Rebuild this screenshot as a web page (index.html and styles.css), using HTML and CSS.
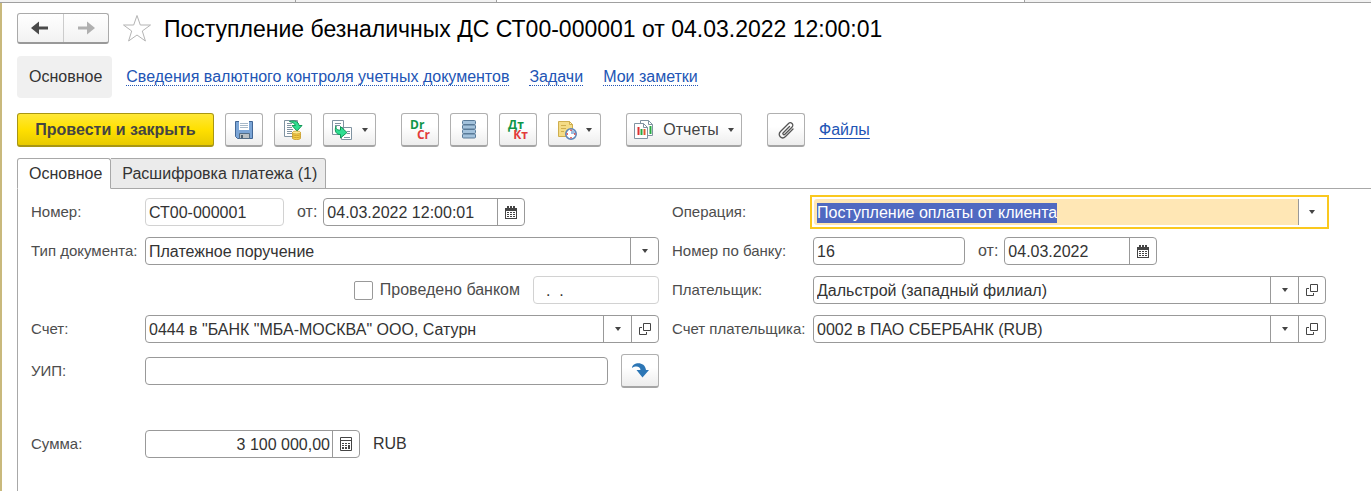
FILE: index.html
```html
<!DOCTYPE html>
<html lang="ru">
<head>
  <meta charset="UTF-8">
  <title>Поступление безналичных ДС</title>
  <meta name="viewport" content="width=device-width, initial-scale=1.0">
  <link rel="stylesheet" href="styles.css">
</head>
<body>

<!-- общие значки -->
<svg class="sprite" aria-hidden="true">
  <symbol id="i-calendar" viewBox="0 0 12 13">
    <path fill="#444" d="M0 2h2V0h2v2h1V0h2v2h1V0h2v2h2v11H0z"/>
    <path fill="#fff" d="M1 5h10v7H1z"/>
    <path fill="#444" d="M2 6h2v1H2zM5 6h2v1H5zM8 6h2v1H8zM2 8h2v1H2zM5 8h2v1H5zM8 8h2v1H8zM2 10h2v1H2zM5 10h2v1H5zM8 10h2v1H8z"/>
  </symbol>
  <symbol id="i-open" viewBox="0 0 12 12">
    <path fill="none" stroke="#444" d="M4.500 .5h7v7h-7zM3 4.500H.5v7h7V9"/>
  </symbol>
</svg>

<div class="window-tabs">
  <span></span><span></span><span class="current"></span><span></span>
</div>

<div class="window">
  <header class="title-row">
    <div class="history">
      <button type="button" aria-label="Назад">
        <svg width="18" height="14" viewBox="0 0 18 14"><path fill="#4a4a4a" d="M0 7 8 .5v5h9v3H8v5z"/></svg>
      </button>
      <button type="button" aria-label="Вперед">
        <svg width="18" height="14" viewBox="0 0 18 14"><path fill="#b0b0b0" d="M18 7 10 .5v5H1v3h9v5z"/></svg>
      </button>
    </div>
    <button type="button" class="star" aria-label="В избранное">
      <svg width="30" height="29" viewBox="0 0 30 29"><path fill="none" stroke="#b4b4b4" d="M15 1.500 18.300 11h10.200l-8.200 6 3.100 10L15 21l-8.400 6 3.100-10L1.500 11h10.200z"/></svg>
    </button>
    <h1>Поступление безналичных ДС СТ00-000001 от 04.03.2022 12:00:01</h1>
  </header>

  <nav class="sections">
    <span class="section-current">Основное</span>
    <a href="#">Сведения валютного контроля учетных документов</a>
    <a href="#">Задачи</a>
    <a href="#">Мои заметки</a>
  </nav>

  <div class="toolbar">
    <button type="button" class="btn btn-primary">Провести и закрыть</button>
    <button type="button" class="btn" aria-label="Записать">
      <svg width="20" height="20" viewBox="0 0 20 20">
        <path fill="#7ba5d6" stroke="#426796" d="M1.500 1.500h17v17h-15l-2-2z"/>
        <path fill="#fff" d="M5 1h10v9H5z"/>
        <path stroke="#a7b8c8" d="M6 3.500h8M6 5.500h8M6 7.500h8"/>
        <path fill="#b9c0c4" stroke="#536d86" d="M5.500 13.500h10v5h-10z"/>
        <path fill="#4f6373" d="M7 15h2v3H7z"/>
      </svg>
    </button>
    <button type="button" class="btn" aria-label="Провести">
      <svg width="20" height="20" viewBox="0 0 20 20">
        <path fill="#fff" stroke="#8093a1" d="M1.500.5h13v16h-13z"/>
        <path stroke="#8093a1" d="M4 3.500h5M4 5.500h4M4 7.500h5M4 9.500h6M4 11.500h5M4 13.500h5"/>
        <path fill="#2ede91" stroke="#129757" d="M6.500 1.500c5-1.500 9 0 9.500 4h3L14 11 9 5.500h3.500c-.5-2-3-3-6-4z"/>
        <path fill="#f5cf4c" stroke="#c69a27" stroke-width=".8" d="M9.500 12.500v6c1 1.500 7 1.500 8 0v-6z"/>
        <ellipse cx="13.500" cy="12.500" rx="4" ry="1.500" fill="#ffe98c" stroke="#c69a27" stroke-width=".8"/>
        <path fill="none" stroke="#c69a27" stroke-width=".8" d="M9.500 14.500c1 1.500 7 1.500 8 0M9.500 16.500c1 1.500 7 1.500 8 0"/>
      </svg>
    </button>
    <button type="button" class="btn btn-menu" aria-label="Создать на основании">
      <svg width="21" height="20" viewBox="0 0 21 20">
        <path fill="#fff" stroke="#8093a1" d="M.5.5h11v14H.5zM9.500 7.500h10v12h-10z"/>
        <path stroke="#8093a1" d="M3 3.500h6M3 5.500h5M15 11.500h3M15 13.500h3M12 17.500h6"/>
        <path fill="#2ede91" stroke="#129757" d="M4 6c-.5 3 1.500 4.500 4.500 4V6.500l6.500 6L8.500 18v-3.500C4.500 15 2 11 4 6z"/>
      </svg>
      <i class="caret"></i>
    </button>

    <button type="button" class="btn btn-split" aria-label="Dr Cr">
      <span class="posting"><b class="debit">Dr</b><b class="credit">Cr</b></span>
    </button>
    <button type="button" class="btn" aria-label="Движения документа">
      <svg width="14" height="19" viewBox="0 0 14 19">
        <g fill="#a3c2dc" stroke="#587a98">
          <rect x=".5" y=".5" width="13" height="4" rx="1"/>
          <rect x=".5" y="5" width="13" height="4" rx="1"/>
          <rect x=".5" y="9.500" width="13" height="4" rx="1"/>
          <rect x=".5" y="14" width="13" height="4" rx="1"/>
        </g>
      </svg>
    </button>
    <button type="button" class="btn" aria-label="Дт Кт">
      <span class="posting"><b class="debit">Дт</b><b class="credit">Кт</b></span>
    </button>
    <button type="button" class="btn btn-menu" aria-label="Напоминание">
      <svg width="20" height="20" viewBox="0 0 20 20">
        <path fill="#f4dc86" stroke="#cfae4e" d="M1.500 1.500h11l3 3v12h-14z"/>
        <path fill="#fff3bd" stroke="#cfae4e" d="M12.500 1.500v3h3z"/>
        <path stroke="#cfae4e" d="M4 5.500h5M4 8.500h5M4 11.500h3"/>
        <circle cx="14" cy="14" r="5.200" fill="#fff" stroke="#5b86ba" stroke-width="1.600"/>
        <path fill="#9dbce0" d="M14 14v-4a4 4 0 0 1 4 4z"/>
        <path stroke="#e03b3b" stroke-width="1.400" d="M14 9.500v1.500M14 17v1.500M9.500 14H11M17 14h1.500"/>
      </svg>
      <i class="caret"></i>
    </button>

    <button type="button" class="btn btn-menu btn-reports btn-split">
      <svg width="20" height="20" viewBox="0 0 20 20">
        <path fill="#fff" stroke="#8093a1" d="M6.500.5h8l4 4v11h-12z"/>
        <path stroke="#27ab42" stroke-width="2" d="M16.500 6v8"/>
        <path fill="#fff" stroke="#8093a1" d="M.5 3.500h9l4 4v11H.5z"/>
        <path fill="none" stroke="#8093a1" d="M9.500 3.500v4h4M14.500.5v4h4"/>
        <path stroke="#dd3030" stroke-width="2" d="M4.500 7v8"/>
        <path stroke="#27ab42" stroke-width="2" d="M7.500 9v6"/>
        <path stroke="#e05a30" stroke-width="2" d="M10.500 9v6"/>
      </svg>
      Отчеты
      <i class="caret"></i>
    </button>
    <button type="button" class="btn btn-split" aria-label="Вложения">
      <svg width="18" height="18" viewBox="0 0 18 18"><path fill="none" stroke="#555" stroke-width="1.300" stroke-linecap="round" d="M12.500 5.500 6.300 11.700c-1.200 1.200.4 2.800 1.600 1.600l7-7c2.600-2.600-1-6.200-3.600-3.600L3.500 10.500c-3.700 3.700 1.300 8.700 5 5l7.500-7.500"/></svg>
    </button>
    <a href="#" class="files-link">Файлы</a>
  </div>

  <div class="tabs" role="tablist">
    <button type="button" class="tab tab-active" role="tab" aria-selected="true">Основное</button>
    <button type="button" class="tab" role="tab" aria-selected="false">Расшифровка платежа (1)</button>
  </div>

  <form class="panel">
    <div class="column">
      <div class="row">
        <label class="label" for="number">Номер:</label>
        <input class="field field-readonly w-number" id="number" value="СТ00-000001" readonly>
        <label class="label-from" for="date">от:</label>
        <div class="field w-datetime">
          <input id="date" value="04.03.2022 12:00:01">
          <button type="button" aria-label="Выбрать дату"><svg width="12" height="13"><use href="#i-calendar"/></svg></button>
        </div>
      </div>
      <div class="row">
        <label class="label" for="doctype">Тип документа:</label>
        <div class="field grow">
          <div class="select"><select id="doctype"><option>Платежное поручение</option></select></div>
        </div>
      </div>
      <div class="row row-end">
        <label class="check"><input type="checkbox"> Проведено банком</label>
        <input class="field field-readonly w-bankdate" value="  .  ." aria-label="Дата проведения банком" readonly>
      </div>
      <div class="row">
        <label class="label" for="account">Счет:</label>
        <div class="field grow">
          <div class="select"><select id="account"><option>0444 в "БАНК "МБА-МОСКВА" ООО, Сатурн</option></select></div>
          <button type="button" aria-label="Открыть счет"><svg width="12" height="12"><use href="#i-open"/></svg></button>
        </div>
      </div>
      <div class="row row-uip">
        <label class="label" for="uip">УИП:</label>
        <input class="field grow" id="uip">
        <button type="button" class="btn btn-uip" aria-label="Заполнить УИП">
          <svg width="17" height="15" viewBox="0 0 17 15"><path fill="#2c76b5" d="M0 5C0-1 13-2.500 14 7h3l-6.500 7.500L4.500 7h4C8.500 3.500 4 2.500 0 5z"/></svg>
        </button>
      </div>
      <div class="row row-sum">
        <label class="label" for="sum">Сумма:</label>
        <div class="field w-sum">
          <input class="number" id="sum" value="3 100 000,00">
          <button type="button" aria-label="Калькулятор">
            <svg width="12" height="14" viewBox="0 0 12 14">
              <path fill="none" stroke="#444" d="M.5.5h11v13H.5z"/>
              <path fill="#444" d="M1 3h10v1H1zM2 6h2v1H2zM5 6h2v1H5zM8 6h2v1H8zM2 8h2v1H2zM5 8h2v1H5zM8 8h2v4H8zM2 10h2v2H2zM5 10h2v2H5z"/>
            </svg>
          </button>
        </div>
        <span class="currency">RUB</span>
      </div>
    </div>

    <div class="column column-right">
      <div class="row">
        <label class="label" for="operation">Операция:</label>
        <div class="field field-focus grow">
          <input id="operation" value="Поступление оплаты от клиента" role="combobox" aria-expanded="false">
          <button type="button" aria-label="Выбрать операцию"><i class="caret"></i></button>
        </div>
      </div>
      <div class="row">
        <label class="label" for="banknumber">Номер по банку:</label>
        <input class="field w-banknumber" id="banknumber" value="16">
        <label class="label-from" for="bankdate">от:</label>
        <div class="field w-date">
          <input id="bankdate" value="04.03.2022">
          <button type="button" aria-label="Выбрать дату"><svg width="12" height="13"><use href="#i-calendar"/></svg></button>
        </div>
      </div>
      <div class="row">
        <label class="label" for="payer">Плательщик:</label>
        <div class="field grow">
          <div class="select"><select id="payer"><option>Дальстрой (западный филиал)</option></select></div>
          <button type="button" aria-label="Открыть плательщика"><svg width="12" height="12"><use href="#i-open"/></svg></button>
        </div>
      </div>
      <div class="row">
        <label class="label" for="payeraccount">Счет плательщика:</label>
        <div class="field grow">
          <div class="select"><select id="payeraccount"><option>0002 в ПАО СБЕРБАНК (RUB)</option></select></div>
          <button type="button" aria-label="Открыть счет плательщика"><svg width="12" height="12"><use href="#i-open"/></svg></button>
        </div>
      </div>
    </div>
  </form>
</div>

<script src="script.js"></script>
</body>
</html>
```
FILE: styles.css
```css
* { box-sizing: border-box; }
body {
  margin: 0;
  min-height: 100vh;
  display: flex;
  flex-direction: column;
  background: #fff;
  color: #333;
  font-family: "Liberation Sans", Arial, sans-serif;
  font-size: 16px;
  line-height: 20px;
}
button, input, select {
  font: inherit;
  color: inherit;
}
button {
  padding: 0;
  border: none;
  background: none;
  display: flex;
  align-items: center;
  justify-content: center;
}
a { color: #2255b5; }
.sprite { display: none; }

/* нижний край вкладок окна */
.window-tabs {
  display: flex;
  height: 3px;
  background: #f2f2f2;
  border-bottom: 1px solid #a0a0a0;
}
.window-tabs span {
  flex: 0 1 201px;
  border-right: 1px solid #a0a0a0;
}
.window-tabs span:first-child { flex-basis: 296px; }
.window-tabs span:last-child { flex: 1; border: none; }
.window-tabs .current { flex-basis: 528px; background: #fff; }

.window {
  flex: 1;
  display: flex;
  flex-direction: column;
  border-left: 2px solid #c9b97c;
  padding: 10px 0 0 15px;
}

.title-row {
  display: flex;
  align-items: center;
  height: 31px;
}
.history {
  display: flex;
  width: 92px;
  height: 31px;
  border: 1px solid #aaa;
  border-bottom: 2px solid #999;
  border-radius: 3px;
  background: linear-gradient(#fff, #f2f2f2);
}
.history button { flex: 1; }
.history button + button { border-left: 1px solid #ccc; }
.star { margin: 0 12px 0 13px; }
h1 {
  margin: 0;
  color: #000;
  font-size: 23px;
  font-weight: normal;
  line-height: 28px;
  white-space: nowrap;
}

.sections {
  display: flex;
  align-items: center;
  gap: 20px;
  margin-top: 12px;
}
.sections a {
  text-decoration: none;
  line-height: 17px;
  border-bottom: 1px dotted #2255b5;
}
.section-current {
  margin-right: -6px;
  padding: 11px 10px 11px 12px;
  border-radius: 4px;
  background: #f0f0f0;
}

.toolbar {
  display: flex;
  align-items: center;
  gap: 11px;
  margin-top: 15px;
}
.btn {
  flex: none;
  width: 38px;
  height: 34px;
  border: 1px solid #b0b0b0;
  border-bottom: 2px solid #a5a5a5;
  border-radius: 3px;
  background: linear-gradient(#fff 40%, #ededed);
}
.btn-primary {
  width: 197px;
  border-color: #a89613;
  background: linear-gradient(#ffe838, #ffe000 50%, #e8ca00);
  color: #444;
  font-weight: bold;
}
.btn-menu {
  width: 53px;
  gap: 9px;
}
.btn-split { margin-left: 14px; }
.btn-reports {
  width: 116px;
  color: #444;
}
.caret {
  border: 3px solid transparent;
  border-top: 4px solid #444;
  border-bottom: none;
}
.posting {
  display: flex;
  flex-direction: column;
  width: 20px;
  font-family: "Open Sans", sans-serif;
  font-size: 12px;
  line-height: 10px;
}
.debit {
  align-self: flex-start;
  color: #0f9648;
}
.credit {
  align-self: flex-end;
  color: #e23b3b;
}
.files-link { margin-left: 3px; text-underline-offset: 3px; }

.tabs {
  display: flex;
  height: 31px;
  margin-top: 11px;
  border-bottom: 1px solid #a8a8a8;
}
.tab {
  height: 31px;
  padding: 0 8px 0 11px;
  border: 1px solid #a8a8a8;
  border-left: none;
  border-radius: 0 3px 0 0;
  background: #ebebeb;
}
.tab-active {
  border-left: 1px solid #a8a8a8;
  border-bottom-color: #fff;
  border-radius: 3px 3px 0 0;
  background: #fff;
}

.panel {
  flex: 1;
  display: grid;
  grid-template-columns: 628px minmax(0, 654px);
  column-gap: 13px;
  align-items: start;
  padding: 9px 12px 32px 13px;
  border-left: 1px solid #a8a8a8;
}
.column {
  display: flex;
  flex-direction: column;
  gap: 11px;
}
.row {
  display: flex;
  align-items: center;
  height: 28px;
}
.row-end { justify-content: flex-end; }
.row-uip { margin-top: 3px; }
.row-sum { margin-top: 34px; }
.label {
  flex: none;
  width: 114px;
  color: #4d4d4d;
  font-size: 15px;
  white-space: nowrap;
}
.column-right .label { width: 141px; }
.label-from {
  padding: 0 6px 0 13px;
  color: #4d4d4d;
}

.field {
  display: flex;
  height: 28px;
  min-width: 0;
  border: 1px solid #999;
  border-radius: 4px;
  background: #fff;
}
input.field, .field input { padding: 1px 3px 0; }
.field input {
  flex: 1;
  min-width: 0;
  border: none;
  outline: none;
  background: none;
}
.field input.number { padding: 1px 2px 0; text-align: right; }
.field button {
  flex: none;
  width: 27px;
  border-left: 1px solid #999;
}
.field-readonly { border-color: #d2d2d2; }
.grow { flex: 1; }
.w-number { width: 139px; }
.w-datetime { width: 202px; }
.w-bankdate { width: 126px; }
.w-sum { width: 215px; }
.w-banknumber { width: 152px; }
.w-date { width: 153px; }

.select {
  flex: 1;
  min-width: 0;
  display: flex;
  position: relative;
}
.select select {
  flex: 1;
  min-width: 0;
  padding: 1px 28px 0 3px;
  border: none;
  outline: none;
  background: none;
  appearance: none;
}
.select::before {
  content: "";
  position: absolute;
  top: 0;
  right: 0;
  width: 27px;
  height: 100%;
  border-left: 1px solid #999;
  pointer-events: none;
}
.select::after {
  content: "";
  position: absolute;
  top: 11px;
  right: 10px;
  border: 3px solid transparent;
  border-top: 4px solid #444;
  border-bottom: none;
  pointer-events: none;
}

.field-focus {
  border-color: #fff;
  border-radius: 0;
  outline: 2px solid #fac81e;
  outline-offset: 1px;
}
.field-focus input { border-radius: 3px 0 0 3px; background: #ffe7b5; }
.field-focus input::selection {
  background: #5069c1;
  color: #fff;
}

.check {
  display: flex;
  align-items: center;
  gap: 7px;
  margin-right: 13px;
  color: #4d4d4d;
}
.check input {
  width: 19px;
  height: 19px;
  margin: 0;
  border: 1px solid #999;
  border-radius: 2px;
  appearance: none;
}
.btn-uip { margin-left: 13px; }
.currency { margin-left: 13px; }
```
FILE: script.js
```javascript
const operation = document.getElementById('operation');
operation.focus();
operation.select();
```
